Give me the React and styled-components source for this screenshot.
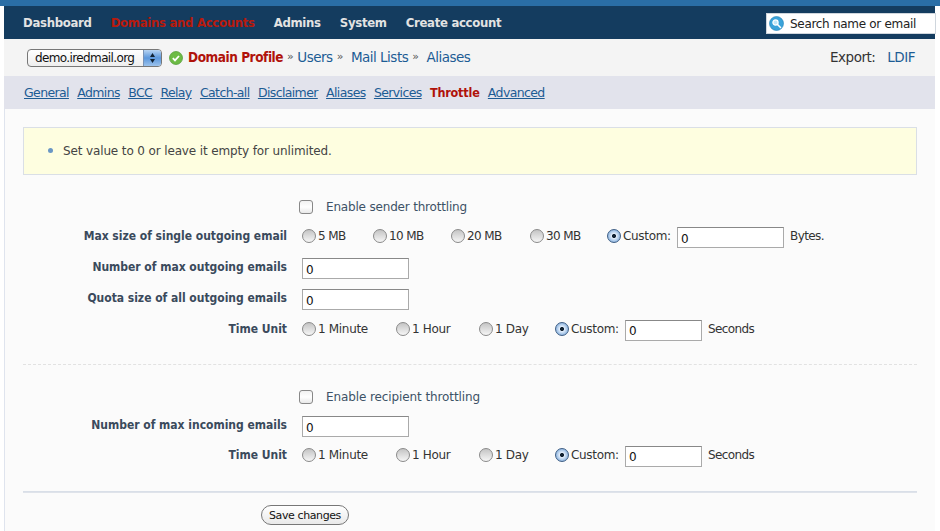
import React from 'react';
import styled, { createGlobalStyle } from 'styled-components';

const BOLD = '"DejaVu Sans Condensed", "DejaVu Sans", sans-serif';

const Global = createGlobalStyle`
  html, body { margin: 0; padding: 0; background: #fff; }
  body { font-family: "DejaVu Sans", Tahoma, sans-serif; font-size: 12px; color: #333; }
`;
const Page = styled.div`
  width: 940px; height: 531px; overflow: hidden; padding: 0 5px 0 4px; box-sizing: border-box;
`;
const TopStripe = styled.div`height: 6px; background: #2a6ea6; margin-left: -4px; margin-right: -5px;`;
const Nav = styled.div`
  height: 33px; background: #143c5f; display: flex; align-items: center; justify-content: space-between;
  padding-left: 19px; box-sizing: border-box;
`;
const NavLinks = styled.div`display: flex; gap: 19px;`;
const NavLink = styled.a`
  font-family: ${BOLD}; font-size: 13px; font-weight: 700; letter-spacing: -0.3px; white-space: nowrap;
  color: ${p => (p.$active ? '#b81a0d' : '#e3e3e3')};
`;
const Search = styled.div`
  width: 170px; height: 21px; background: #fff; border: 1px solid #cfd6dd; box-sizing: border-box;
  display: flex; align-items: center; gap: 6px; padding-left: 2px; margin: 2px -1px 0 0;
  font-size: 12px; letter-spacing: -0.3px; color: #222; white-space: nowrap;
`;
const Crumbs = styled.div`
  height: 37px; background: #f4f4f4; display: flex; align-items: center; padding: 0 20px 2px 23px; box-sizing: border-box;
`;
const DomainSelect = styled.div`
  width: 135px; height: 18px; box-sizing: border-box; border: 1px solid #777; border-radius: 4px; margin-top: 2px;
  background: linear-gradient(#fff, #eee); display: flex; align-items: center; justify-content: space-between;
  padding-left: 7px; font-size: 12px; letter-spacing: -0.62px; color: #111; overflow: hidden; margin-right: 7px;
`;
const SelectArrow = styled.span`
  width: 17px; align-self: stretch; background: linear-gradient(#b8d4f2, #5b97dc 50%, #9cc3ec);
  display: flex; align-items: center; justify-content: center; border-left: 1px solid #7a93b5;
`;
const CheckIcon = styled.svg`margin-top: 2px; flex: none;`;
const CrumbLinks = styled.div`display: flex; align-items: center; margin-left: 5px; flex: 1; font-size: 13.5px; letter-spacing: -0.5px;`;
const Crumb = styled.a`
  color: ${p => (p.$active ? '#b0120a' : '#1d5c94')};
  font-weight: ${p => (p.$active ? 700 : 400)};
  font-family: ${p => (p.$active ? BOLD : 'inherit')};
  letter-spacing: ${p => (p.$active ? '-0.45px' : 'inherit')};
  white-space: nowrap;
`;
const Sep = styled.span`color: #555; font-size: 11px; margin: ${p => p.$m || '0 4px'};`;
const Export = styled.div`display: flex; gap: 12px; font-size: 13.5px; letter-spacing: -0.5px; color: #333;`;
const Tabs = styled.div`
  height: 33px; background: #e2e3ec; display: flex; align-items: center; padding-left: 20px; gap: 8.3px; box-sizing: border-box;
`;
const Tab = styled.a`
  font-size: 12.5px; letter-spacing: ${p => (p.$active ? '-0.2px' : '-0.62px')}; white-space: nowrap;
  color: ${p => (p.$active ? '#b0120a' : '#1d5c94')};
  text-decoration: ${p => (p.$active ? 'none' : 'underline')};
  font-weight: ${p => (p.$active ? 700 : 400)};
  font-family: ${p => (p.$active ? BOLD : 'inherit')};
`;
const Content = styled.div`
  height: 422px; background: #fbfbfb; border-left: 1px solid #dfe4ee; box-sizing: border-box;
  padding: 18px 18px 0 18px;
`;
const Notice = styled.ul`
  margin: 0; height: 48px; box-sizing: border-box; background: #fefee0; border: 1px solid #dadfe6;
  padding: 0 0 0 39px; display: flex; align-items: center; list-style: none; position: relative;
  font-size: 12px; letter-spacing: -0.13px; color: #444;
`;
const Bullet = styled.li`
  &::before { content: ''; position: absolute; left: 24px; top: 20px; width: 5px; height: 5px; border-radius: 50%; background: #6a97c4; }
`;
const Row = styled.div`
  display: flex; align-items: center; height: ${p => p.$h || 31}px; margin-top: ${p => p.$mt || 0}px;
`;
const Label = styled.div`
  width: 264px; flex: none; text-align: right; font-family: ${BOLD}; font-weight: 700; font-size: 12px; letter-spacing: -0.02px; color: #3a4a5c;
  margin-right: 15px; white-space: nowrap;
`;
const CheckBox = styled.input.attrs({ type: 'checkbox' })`
  appearance: none; margin: 0 13px 0 -3px; width: 14px; height: 14px; border: 1px solid #888; border-radius: 3px;
  background: linear-gradient(#f2f2f2, #fff 50%, #e8e8e8);
`;
const CheckText = styled.span`font-size: 12px; letter-spacing: ${p => p.$ls || '-0.18px'}; color: #3d5266;`;
const Option = styled.label`
  display: flex; align-items: center; width: ${p => p.$w}px; flex: none; font-size: 12px; letter-spacing: ${p => p.$ls || '-0.32px'}; color: #333; white-space: nowrap;
`;
const Radio = styled.input.attrs({ type: 'radio' })`
  appearance: none; margin: 0 2px 0 0; width: 14px; height: 14px; border-radius: 50%; flex: none;
  border: 1px solid ${p => (p.checked ? '#3f5f85' : '#8a8a8a')};
  box-sizing: border-box;
  background: ${p => (p.checked
    ? 'radial-gradient(circle, #123 0 1.6px, #e3eefb 2.4px, #5d94d0 100%)'
    : 'linear-gradient(#c4c4c4, #f6f6f6)')};
`;
const TextInput = styled.input.attrs({ type: 'text' })`
  width: ${p => p.$w}px; height: 21px; box-sizing: border-box; border: 1px solid #aaa; border-top-color: #888; background: #fff;
  padding: 2px 0 0 3px; margin: 3px 0 0; font-family: "DejaVu Sans", sans-serif; font-size: 12px; color: #111; outline: none;
`;
const Unit = styled.span`margin-left: 6px; font-size: 12px; letter-spacing: -0.6px; color: #333;`;
const Dashed = styled.div`border-top: 1px dashed #e2e2e2; margin: 20px 0 18px;`;
const Rule = styled.div`border-top: 1px solid #d9dfe8; border-bottom: 1px solid #dfe3ea; height: 0; margin-top: 21px;`;
const ButtonRow = styled.div`display: flex; padding-left: 238px; margin-top: 12px;`;
const Save = styled.button`
  height: 20px; width: 88px; padding: 0; border: 1px solid #777; border-radius: 10px;
  background: linear-gradient(#fff, #e9e9e9); font-family: "DejaVu Sans", sans-serif; font-size: 11px; letter-spacing: -0.4px; color: #111;
`;

const SIZE_WIDTHS = [71, 78, 79, 77];
const TIME_WIDTHS = [94, 83, 76];

function OptionRow({ widths, labels, inputW, unit, ls }) {
  return (
    <>
      {labels.map((l, i) => (
        <Option key={l} $w={widths[i]} $ls={ls}>
          <Radio readOnly checked={false} />{l}
        </Option>
      ))}
      <Option $w={70}>
        <Radio readOnly checked />Custom:
      </Option>
      <TextInput $w={inputW} defaultValue="0" />
      <Unit>{unit}</Unit>
    </>
  );
}

function TimeUnit() {
  return (
    <Row>
      <Label>Time Unit</Label>
      <OptionRow widths={TIME_WIDTHS} labels={['1 Minute', '1 Hour', '1 Day']} inputW={77} unit="Seconds" />
    </Row>
  );
}

export default function App() {
  return (
    <Page>
      <Global />
      <TopStripe />
      <Nav>
        <NavLinks>
          <NavLink>Dashboard</NavLink>
          <NavLink $active>Domains and Accounts</NavLink>
          <NavLink>Admins</NavLink>
          <NavLink>System</NavLink>
          <NavLink>Create account</NavLink>
        </NavLinks>
        <Search>
          <svg width="15" height="15" viewBox="0 0 15 15">
            <circle cx="7.5" cy="7.5" r="7" fill="#3aa3da" stroke="#1f7fb6" strokeWidth=".6" />
            <circle cx="6.5" cy="6.5" r="2.6" fill="#bfe6f7" stroke="#fff" strokeWidth="1.2" />
            <path d="M8.5 8.5l3 3" stroke="#fff" strokeWidth="1.6" strokeLinecap="round" />
          </svg>
          Search name or email
        </Search>
      </Nav>
      <Crumbs>
        <DomainSelect>
          demo.iredmail.org
          <SelectArrow>
            <svg width="7" height="12" viewBox="0 0 7 12">
              <path d="M3.5 1L6 5H1zM3.5 11L1 7h5z" fill="#123" />
            </svg>
          </SelectArrow>
        </DomainSelect>
        <CheckIcon width="14" height="14" viewBox="0 0 14 14">
          <circle cx="7" cy="7" r="6.5" fill="#6dbb45" stroke="#4d9a30" strokeWidth=".7" />
          <path d="M3.8 7.2l2.2 2.2 4-4.4" fill="none" stroke="#fff" strokeWidth="1.8" />
        </CheckIcon>
        <CrumbLinks>
          <Crumb $active>Domain Profile</Crumb><Sep>»</Sep>
          <Crumb>Users</Crumb><Sep $m="0 8px 0 4px">»</Sep>
          <Crumb>Mail Lists</Crumb><Sep $m="0 8px 0 4px">»</Sep>
          <Crumb>Aliases</Crumb>
        </CrumbLinks>
        <Export>
          <span>Export:</span>
          <Crumb>LDIF</Crumb>
        </Export>
      </Crumbs>
      <Tabs>
        {['General', 'Admins', 'BCC', 'Relay', 'Catch-all', 'Disclaimer', 'Aliases', 'Services'].map(t => (
          <Tab key={t}>{t}</Tab>
        ))}
        <Tab $active>Throttle</Tab>
        <Tab>Advanced</Tab>
      </Tabs>
      <Content>
        <Notice>
          <Bullet>Set value to 0 or leave it empty for unlimited.</Bullet>
        </Notice>
        <Row $h={28} $mt={18}>
          <Label />
          <CheckBox />
          <CheckText>Enable sender throttling</CheckText>
        </Row>
        <Row $h={30}>
          <Label>Max size of single outgoing email</Label>
          <OptionRow widths={SIZE_WIDTHS} labels={['5 MB', '10 MB', '20 MB', '30 MB']} inputW={107} unit="Bytes." ls="-0.6px" />
        </Row>
        <Row $h={32}>
          <Label>Number of max outgoing emails</Label>
          <TextInput $w={107} defaultValue="0" />
        </Row>
        <Row $h={30}>
          <Label>Quota size of all outgoing emails</Label>
          <TextInput $w={107} defaultValue="0" />
        </Row>
        <TimeUnit />
        <Dashed />
        <Row $h={28}>
          <Label />
          <CheckBox />
          <CheckText $ls="-0.1px">Enable recipient throttling</CheckText>
        </Row>
        <Row $h={28}>
          <Label>Number of max incoming emails</Label>
          <TextInput $w={107} defaultValue="0" />
        </Row>
        <TimeUnit />
        <Rule />
        <ButtonRow><Save>Save changes</Save></ButtonRow>
      </Content>
    </Page>
  );
}
